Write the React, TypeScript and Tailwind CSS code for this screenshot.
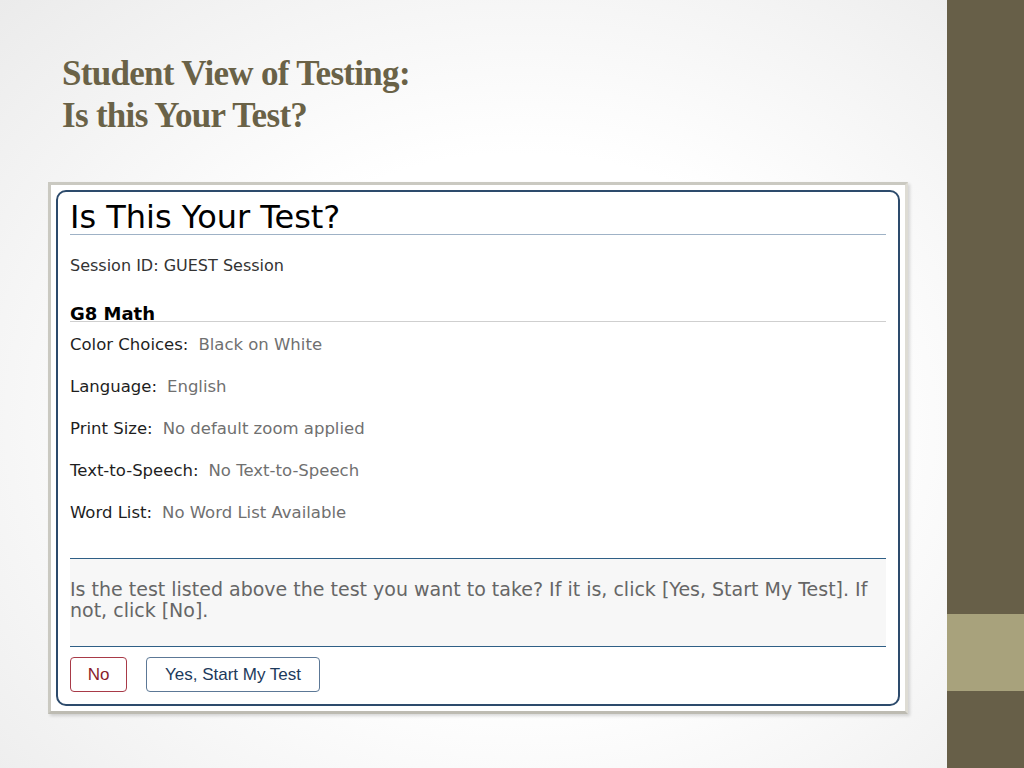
import React from 'react'

const settings = [
  { label: 'Color Choices:', value: 'Black on White' },
  { label: 'Language:', value: 'English' },
  { label: 'Print Size:', value: 'No default zoom applied' },
  { label: 'Text-to-Speech:', value: 'No Text-to-Speech' },
  { label: 'Word List:', value: 'No Word List Available' },
]

function TestCard() {
  return (
    <div className="border-[3px] border-[#cac9c1] border-r-[#dedcd4] border-b-[#bdbbb2] bg-white p-[5px] shadow-[2px_2px_3px_rgba(0,0,0,0.15)]">
      <div className="rounded-[10px] border-2 border-[#2d4b6c] px-3 pb-[12px] pt-[8px] font-['DejaVu_Sans',Verdana,sans-serif]">
        <h1 className="border-b border-[#9fb2c6] text-[32px] leading-[34px] text-black">Is This Your Test?</h1>
        <p className="mt-[20px] text-[16px] leading-[21px] text-[#333]">Session ID: GUEST Session</p>

        <h2 className="mt-[31px] border-b border-[#cfcfcf] text-[18px] font-bold leading-[14px] text-black">G8 Math</h2>
        <div className="flex flex-col pt-[2px]">
          {settings.map((s) => (
            <div key={s.label} className="flex h-[42px] items-center gap-[10px] text-[16.5px]">
              <span className="text-[#1e1e1e]">{s.label}</span>
              <span className="text-[#707070]">{s.value}</span>
            </div>
          ))}
        </div>

        <div className="mt-[24px] border-y border-[#2f5f86] bg-[#f7f7f7] pb-[25px] pt-[20px] text-[19px] leading-[21px] text-[#666]">
          Is the test listed above the test you want to take? If it is, click [Yes, Start My Test]. If
          <br />
          not, click [No].
        </div>

        <div className="mt-[10px] flex gap-[19px] font-['Liberation_Sans',Arial,sans-serif] text-[17px]">
          <button className="h-[35px] w-[57px] rounded-[4px] border border-[#a83a48] bg-white text-[#8a1c2c]">No</button>
          <button className="h-[35px] w-[174px] rounded-[4px] border border-[#5c7896] bg-white text-[#1d3a5c]">Yes, Start My Test</button>
        </div>
      </div>
    </div>
  )
}

export default function App() {
  return (
    <div className="flex h-[768px] w-[1024px] overflow-hidden">
      <div className="flex w-[947px] flex-col bg-[radial-gradient(ellipse_at_55%_55%,#ffffff_45%,#ebebeb_100%)]">
        <div className="pl-[62px] pt-[53px] font-['Liberation_Serif','Times_New_Roman',serif] text-[35px] font-bold leading-[42px] tracking-[-0.02em] text-[#6a6247]">
          <div>Student View of Testing:</div>
          <div>Is this Your Test?</div>
        </div>
        <div className="ml-[48px] mt-[45px] w-[860px]">
          <TestCard />
        </div>
      </div>
      <div className="flex w-[77px] flex-col">
        <div className="h-[614px] bg-[#675f48]" />
        <div className="h-[77px] bg-[#a8a27c]" />
        <div className="flex-1 bg-[#675f48]" />
      </div>
    </div>
  )
}
